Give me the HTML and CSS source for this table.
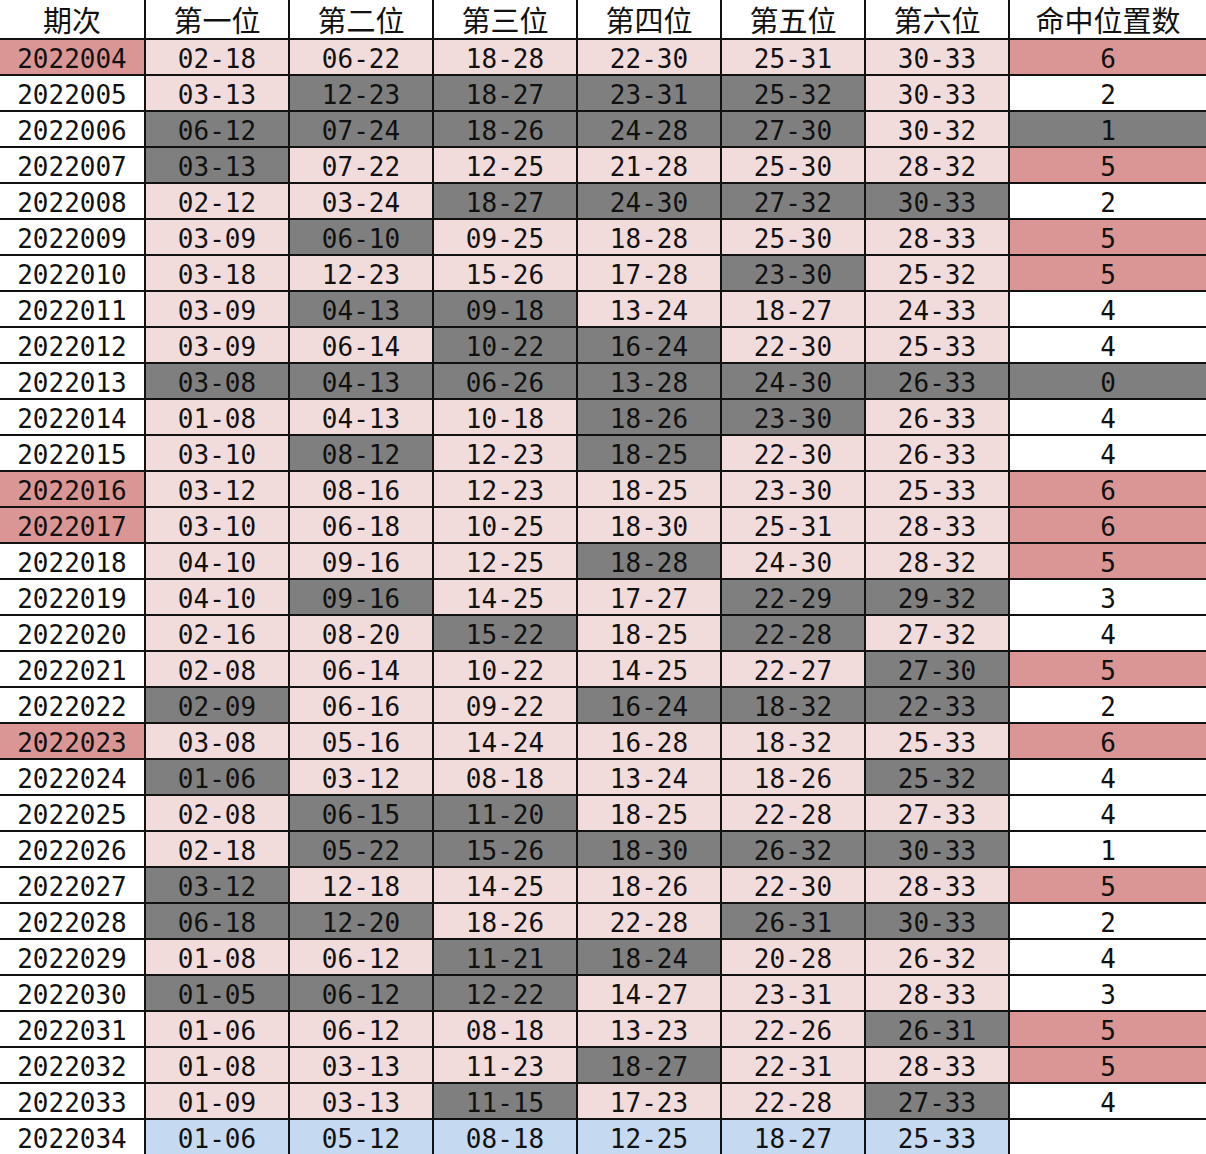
FILE: index.html
```html
<!DOCTYPE html>
<html lang="zh">
<head>
<meta charset="utf-8">
<title>期次</title>
<link rel="stylesheet" href="styles.css">
</head>
<body>
<div class="sheet">
  <div class="c h">期次</div><div class="c h">第一位</div><div class="c h">第二位</div><div class="c h">第三位</div><div class="c h">第四位</div><div class="c h">第五位</div><div class="c h">第六位</div><div class="c h">命中位置数</div>

  <div class="c r">2022004</div><div class="c p">02-18</div><div class="c p">06-22</div><div class="c p">18-28</div><div class="c p">22-30</div><div class="c p">25-31</div><div class="c p">30-33</div><div class="c r">6</div>
  <div class="c w">2022005</div><div class="c p">03-13</div><div class="c g">12-23</div><div class="c g">18-27</div><div class="c g">23-31</div><div class="c g">25-32</div><div class="c p">30-33</div><div class="c w">2</div>
  <div class="c w">2022006</div><div class="c g">06-12</div><div class="c g">07-24</div><div class="c g">18-26</div><div class="c g">24-28</div><div class="c g">27-30</div><div class="c p">30-32</div><div class="c g">1</div>
  <div class="c w">2022007</div><div class="c g">03-13</div><div class="c p">07-22</div><div class="c p">12-25</div><div class="c p">21-28</div><div class="c p">25-30</div><div class="c p">28-32</div><div class="c r">5</div>
  <div class="c w">2022008</div><div class="c p">02-12</div><div class="c p">03-24</div><div class="c g">18-27</div><div class="c g">24-30</div><div class="c g">27-32</div><div class="c g">30-33</div><div class="c w">2</div>
  <div class="c w">2022009</div><div class="c p">03-09</div><div class="c g">06-10</div><div class="c p">09-25</div><div class="c p">18-28</div><div class="c p">25-30</div><div class="c p">28-33</div><div class="c r">5</div>
  <div class="c w">2022010</div><div class="c p">03-18</div><div class="c p">12-23</div><div class="c p">15-26</div><div class="c p">17-28</div><div class="c g">23-30</div><div class="c p">25-32</div><div class="c r">5</div>
  <div class="c w">2022011</div><div class="c p">03-09</div><div class="c g">04-13</div><div class="c g">09-18</div><div class="c p">13-24</div><div class="c p">18-27</div><div class="c p">24-33</div><div class="c w">4</div>
  <div class="c w">2022012</div><div class="c p">03-09</div><div class="c p">06-14</div><div class="c g">10-22</div><div class="c g">16-24</div><div class="c p">22-30</div><div class="c p">25-33</div><div class="c w">4</div>
  <div class="c w">2022013</div><div class="c g">03-08</div><div class="c g">04-13</div><div class="c g">06-26</div><div class="c g">13-28</div><div class="c g">24-30</div><div class="c g">26-33</div><div class="c g">0</div>
  <div class="c w">2022014</div><div class="c p">01-08</div><div class="c p">04-13</div><div class="c p">10-18</div><div class="c g">18-26</div><div class="c g">23-30</div><div class="c p">26-33</div><div class="c w">4</div>
  <div class="c w">2022015</div><div class="c p">03-10</div><div class="c g">08-12</div><div class="c p">12-23</div><div class="c g">18-25</div><div class="c p">22-30</div><div class="c p">26-33</div><div class="c w">4</div>
  <div class="c r">2022016</div><div class="c p">03-12</div><div class="c p">08-16</div><div class="c p">12-23</div><div class="c p">18-25</div><div class="c p">23-30</div><div class="c p">25-33</div><div class="c r">6</div>
  <div class="c r">2022017</div><div class="c p">03-10</div><div class="c p">06-18</div><div class="c p">10-25</div><div class="c p">18-30</div><div class="c p">25-31</div><div class="c p">28-33</div><div class="c r">6</div>
  <div class="c w">2022018</div><div class="c p">04-10</div><div class="c p">09-16</div><div class="c p">12-25</div><div class="c g">18-28</div><div class="c p">24-30</div><div class="c p">28-32</div><div class="c r">5</div>
  <div class="c w">2022019</div><div class="c p">04-10</div><div class="c g">09-16</div><div class="c p">14-25</div><div class="c p">17-27</div><div class="c g">22-29</div><div class="c g">29-32</div><div class="c w">3</div>
  <div class="c w">2022020</div><div class="c p">02-16</div><div class="c p">08-20</div><div class="c g">15-22</div><div class="c p">18-25</div><div class="c g">22-28</div><div class="c p">27-32</div><div class="c w">4</div>
  <div class="c w">2022021</div><div class="c p">02-08</div><div class="c p">06-14</div><div class="c p">10-22</div><div class="c p">14-25</div><div class="c p">22-27</div><div class="c g">27-30</div><div class="c r">5</div>
  <div class="c w">2022022</div><div class="c g">02-09</div><div class="c p">06-16</div><div class="c p">09-22</div><div class="c g">16-24</div><div class="c g">18-32</div><div class="c g">22-33</div><div class="c w">2</div>
  <div class="c r">2022023</div><div class="c p">03-08</div><div class="c p">05-16</div><div class="c p">14-24</div><div class="c p">16-28</div><div class="c p">18-32</div><div class="c p">25-33</div><div class="c r">6</div>
  <div class="c w">2022024</div><div class="c g">01-06</div><div class="c p">03-12</div><div class="c p">08-18</div><div class="c p">13-24</div><div class="c p">18-26</div><div class="c g">25-32</div><div class="c w">4</div>
  <div class="c w">2022025</div><div class="c p">02-08</div><div class="c g">06-15</div><div class="c g">11-20</div><div class="c p">18-25</div><div class="c p">22-28</div><div class="c p">27-33</div><div class="c w">4</div>
  <div class="c w">2022026</div><div class="c p">02-18</div><div class="c g">05-22</div><div class="c g">15-26</div><div class="c g">18-30</div><div class="c g">26-32</div><div class="c g">30-33</div><div class="c w">1</div>
  <div class="c w">2022027</div><div class="c g">03-12</div><div class="c p">12-18</div><div class="c p">14-25</div><div class="c p">18-26</div><div class="c p">22-30</div><div class="c p">28-33</div><div class="c r">5</div>
  <div class="c w">2022028</div><div class="c g">06-18</div><div class="c g">12-20</div><div class="c p">18-26</div><div class="c p">22-28</div><div class="c g">26-31</div><div class="c g">30-33</div><div class="c w">2</div>
  <div class="c w">2022029</div><div class="c p">01-08</div><div class="c p">06-12</div><div class="c g">11-21</div><div class="c g">18-24</div><div class="c p">20-28</div><div class="c p">26-32</div><div class="c w">4</div>
  <div class="c w">2022030</div><div class="c g">01-05</div><div class="c g">06-12</div><div class="c g">12-22</div><div class="c p">14-27</div><div class="c p">23-31</div><div class="c p">28-33</div><div class="c w">3</div>
  <div class="c w">2022031</div><div class="c p">01-06</div><div class="c p">06-12</div><div class="c p">08-18</div><div class="c p">13-23</div><div class="c p">22-26</div><div class="c g">26-31</div><div class="c r">5</div>
  <div class="c w">2022032</div><div class="c p">01-08</div><div class="c p">03-13</div><div class="c p">11-23</div><div class="c g">18-27</div><div class="c p">22-31</div><div class="c p">28-33</div><div class="c r">5</div>
  <div class="c w">2022033</div><div class="c p">01-09</div><div class="c p">03-13</div><div class="c g">11-15</div><div class="c p">17-23</div><div class="c p">22-28</div><div class="c g">27-33</div><div class="c w">4</div>
  <div class="c w">2022034</div><div class="c b">01-06</div><div class="c b">05-12</div><div class="c b">08-18</div><div class="c b">12-25</div><div class="c b">18-27</div><div class="c b">25-33</div><div class="c w"></div>
</div>
</body>
</html>
```

FILE: styles.css
```css
html, body {
  margin: 0;
  padding: 0;
  background: #ffffff;
}

.sheet {
  display: grid;
  width: 1206px;
  grid-template-columns: 144px repeat(6, 142px) 196px;
  grid-template-rows: 38px repeat(31, 34px);
  gap: 2px;
  background: #111111;
}

.c {
  display: flex;
  align-items: center;
  justify-content: center;
  font-family: "DejaVu Sans Mono", "Liberation Mono", monospace;
  font-size: 26px;
  color: #111111;
  line-height: 30px;
  padding-top: 3px;
  background: #ffffff;
}

.h {
  font-family: "Noto Sans CJK SC", "Noto Sans", sans-serif;
  font-size: 29px;
  font-weight: 400;
  line-height: 36px;
  padding-top: 0;
  background: #ffffff;
}

.w { background: #ffffff; }
.p { background: #f2dcdb; }
.g { background: #7f7f7f; }
.r { background: #da9694; }
.b { background: #c5d9f1; }
```
